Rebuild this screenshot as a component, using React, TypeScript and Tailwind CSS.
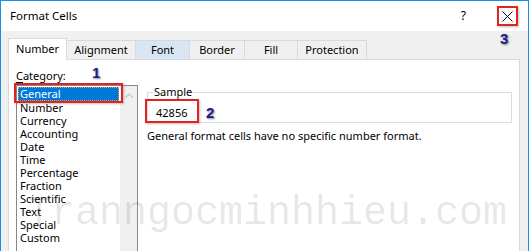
import React from "react";

const font = { fontFamily: '"Noto Sans", "Liberation Sans", sans-serif' };

const tabs = [
  { label: "Number", w: "w-[59px]", active: true },
  { label: "Alignment", w: "w-[69px]" },
  { label: "Font", w: "w-[54px]", hover: true },
  { label: "Border", w: "w-[55px]" },
  { label: "Fill", w: "w-[53px]" },
  { label: "Protection", w: "w-[69px]" },
];

const items = [
  "General",
  "Number",
  "Currency",
  "Accounting",
  "Date",
  "Time",
  "Percentage",
  "Fraction",
  "Scientific",
  "Text",
  "Special",
  "Custom",
];

function Badge({ n, className }: { n: string; className: string }) {
  return (
    <span
      className={`absolute text-[15px] font-bold leading-[15px] text-[#1c1c8a] [text-shadow:1px_1px_2px_rgba(0,0,0,0.45)] ${className}`}
      style={{ fontFamily: '"Liberation Sans", Arial, sans-serif' }}
    >
      {n}
    </span>
  );
}

export default function App() {
  return (
    <div
      className="relative w-[529px] h-[251px] overflow-hidden border-t border-l border-r border-[#1b8ee6] bg-[#f0f0f0] flex flex-col text-black text-[11px]"
      style={font}
    >
      {/* Title bar */}
      <div className="h-[30px] shrink-0 bg-white flex items-center pl-[9px] pr-[10px]">
        <span className="text-[11.5px] leading-[14px]">Format Cells</span>
        <span className="ml-auto mr-[31px] text-[12px] leading-[14px]">?</span>
        <div className="w-[21px] h-[20px] border-2 border-[#e52222] flex items-center justify-center shadow-[1px_1px_2px_rgba(0,0,0,0.25)]">
          <svg width="11" height="11" viewBox="0 0 11 11">
            <path d="M0.5 0.5 L10.5 10.5 M10.5 0.5 L0.5 10.5" stroke="#111" strokeWidth="1" />
          </svg>
        </div>
      </div>

      {/* Body */}
      <div className="flex-1 flex flex-col pl-[7px] pt-[7px]">
        {/* Tabs */}
        <div className="flex items-end h-[21px] relative z-10">
          {tabs.map((t) =>
            t.active ? (
              <div
                key={t.label}
                className={`${t.w} h-[22px] -mb-[1px] bg-white border-t border-l border-r border-[#d9d9d9] flex items-center justify-center text-[11px] leading-[14px] pb-[1px]`}
              >
                {t.label}
              </div>
            ) : (
              <div
                key={t.label}
                className={`${t.w} h-[19px] border-t border-r border-[#d9d9d9] flex items-center justify-center text-[11px] leading-[14px] ${
                  t.hover ? "bg-[#d8e6f3]" : "bg-[#f0f0f0]"
                }`}
              >
                {t.label}
              </div>
            )
          )}
        </div>

        {/* Panel */}
        <div className="w-[512px] h-[220px] shrink-0 bg-white border border-[#d9d9d9] flex">
          {/* Left column */}
          <div className="ml-[7px] w-[122px] flex flex-col">
            <div className="mt-[9px] h-[14px] leading-[14px] text-[11px]">
              <span className="underline underline-offset-2">C</span>ategory:
            </div>
            <div className="mt-[2px] h-[190px] border border-[#828790] flex">
              <div className="flex-1 pt-[1px] pl-[1px] flex flex-col">
                {items.map((it, i) =>
                  i === 0 ? (
                    <div
                      key={it}
                      className="h-[14px] w-[101px] bg-[#0078d7] text-white border border-dotted border-[#f0a040] leading-[12px] pl-[1px]"
                    >
                      {it}
                    </div>
                  ) : (
                    <div key={it} className="h-[13px] leading-[13px] pl-[2px]">
                      {it}
                    </div>
                  )
                )}
              </div>
              <div className="w-[17px] bg-[#f0f0f0] flex justify-center pt-[7px]">
                <svg width="8" height="5" viewBox="0 0 8 5">
                  <path d="M0.5 4.5 L4 1 L7.5 4.5" stroke="#c2c2c2" strokeWidth="1.2" fill="none" />
                </svg>
              </div>
            </div>
          </div>

          {/* Right column */}
          <div className="ml-[9px] w-[365px] flex flex-col pt-[32px]">
            <div className="relative h-[31px] border border-[#dcdcdc] pl-[8px] pt-[13px]">
              <span className="absolute left-[5px] -top-[8px] bg-white px-[1px] leading-[14px]">Sample</span>
              <div className="leading-[14px]">42856</div>
              <div className="absolute -left-[3px] top-[6px] w-[54px] h-[24px] border-2 border-[#e52222] shadow-[1px_1px_2px_rgba(0,0,0,0.25)]" />
              <Badge n="2" className="left-[58px] top-[12px]" />
            </div>
            <div className="mt-[6px] leading-[14px]">General format cells have no specific number format.</div>
          </div>
        </div>
      </div>

      {/* Annotations */}
      <div className="absolute left-[13px] top-[82px] w-[109px] h-[20px] border-2 border-[#e52222] shadow-[1px_1px_2px_rgba(0,0,0,0.25)]" />
      <Badge n="1" className="left-[91px] top-[64px]" />
      <Badge n="3" className="left-[499px] top-[30px]" />

      {/* Watermark */}
      <div
        className="absolute left-[26px] top-[193px] text-[40px] leading-[40px] text-black/10 pointer-events-none whitespace-nowrap"
        style={{ fontFamily: '"Liberation Mono", "Courier New", monospace' }}
      >
        Tranngocminhhieu.com
      </div>
    </div>
  );
}
